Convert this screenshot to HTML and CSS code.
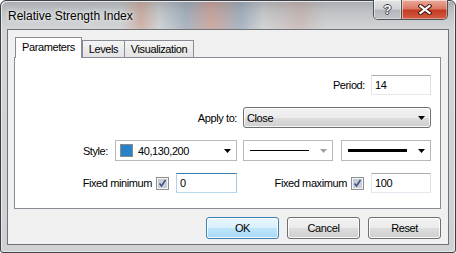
FILE: index.html
```html
<!DOCTYPE html>
<html lang="en">
<head>
    <meta charset="UTF-8">
    <title>Relative Strength Index</title>
    <link rel="stylesheet" href="styles.css">
</head>
<body>

<div class="window">
    <div class="titlebar">
        <span class="title">Relative Strength Index</span>
        <div class="caption-buttons">
            <div class="cap-btn help">?</div>
            <div class="cap-btn close">
                <svg width="14" height="11" viewBox="0 0 14 11">
                    <path d="M2.5 2 L11.5 9 M11.5 2 L2.5 9" stroke="#4a1c14" stroke-width="4.2" stroke-linecap="square"/>
                    <path d="M2.5 2 L11.5 9 M11.5 2 L2.5 9" stroke="#ffffff" stroke-width="2.2" stroke-linecap="square"/>
                </svg>
            </div>
        </div>
    </div>

    <div class="client">
        <div class="tabs">
            <div class="tab active tab-params">Parameters</div>
            <div class="tab tab-levels">Levels</div>
            <div class="tab tab-vis">Visualization</div>
        </div>

        <div class="panel">
            <div class="row row-edit">
                <span>Period:</span>
                <div class="edit">14</div>
            </div>

            <div class="row row-combo">
                <span>Apply to:</span>
                <div class="select">
                    <span>Close</span>
                    <svg class="arrow" width="7" height="4" viewBox="0 0 7 4"><polygon points="0,0 7,0 3.5,4" fill="#000"/></svg>
                </div>
            </div>

            <div class="row row-combo row-style">
                <span class="style-label">Style:</span>
                <div class="combo combo-color">
                    <span class="swatch"></span>
                    <span class="combo-text">40,130,200</span>
                    <svg class="arrow" width="7" height="4" viewBox="0 0 7 4"><polygon points="0,0 7,0 3.5,4" fill="#000"/></svg>
                </div>
                <div class="combo combo-line">
                    <span class="line line-thin"></span>
                    <svg class="arrow" width="7" height="4" viewBox="0 0 7 4"><polygon points="0,0 7,0 3.5,4" fill="#a0a0a0"/></svg>
                </div>
                <div class="combo combo-line combo-last">
                    <span class="line line-thick"></span>
                    <svg class="arrow" width="7" height="4" viewBox="0 0 7 4"><polygon points="0,0 7,0 3.5,4" fill="#000"/></svg>
                </div>
            </div>

            <div class="row row-edit">
                <div class="group group-min">
                    <span>Fixed minimum</span>
                    <svg class="check" width="13" height="13" viewBox="0 0 13 13">
                        <rect x="0.5" y="0.5" width="12" height="12" fill="#f3f4f5" stroke="#8e8f8f"/>
                        <rect x="2" y="2" width="9" height="9" fill="#c9ced6"/>
                        <path d="M3.5 6.5 L5.5 9 L9.5 3" fill="none" stroke="#3e5389" stroke-width="1.6"/>
                    </svg>
                    <div class="edit edit-focus">0</div>
                </div>
                <div class="group group-max">
                    <span>Fixed maximum</span>
                    <svg class="check" width="13" height="13" viewBox="0 0 13 13">
                        <rect x="0.5" y="0.5" width="12" height="12" fill="#f3f4f5" stroke="#8e8f8f"/>
                        <rect x="2" y="2" width="9" height="9" fill="#c9ced6"/>
                        <path d="M3.5 6.5 L5.5 9 L9.5 3" fill="none" stroke="#3e5389" stroke-width="1.6"/>
                    </svg>
                    <div class="edit">100</div>
                </div>
            </div>
        </div>

        <div class="buttons">
            <div class="btn btn-default">OK</div>
            <div class="btn">Cancel</div>
            <div class="btn">Reset</div>
        </div>
    </div>
</div>

</body>
</html>
```

FILE: styles.css
```css
* {
    box-sizing: border-box;
}
body {
    margin: 0;
    background: #ffffff;
    font-family: "Liberation Sans", Arial, sans-serif;
    font-size: 11px;
    letter-spacing: -0.4px;
    color: #000;
    white-space: nowrap;
}
.window {
    width: 456px;
    height: 253px;
    border: 1px solid #3d4044;
    border-radius: 6px 6px 3px 3px;
    padding: 0 6px 7px;
    display: flex;
    flex-direction: column;
    background:
        linear-gradient(90deg, rgba(255,255,255,0) 0, rgba(255,255,255,0) 120px, rgba(205,120,90,.35) 140px, rgba(255,255,255,0) 158px, rgba(80,115,150,.3) 185px, rgba(200,95,70,.35) 210px, rgba(80,115,150,.3) 240px, rgba(255,255,255,0) 262px, rgba(190,110,90,.2) 300px, rgba(255,255,255,0) 325px, rgba(255,255,255,0) 100%) 0 0 / 100% 29px no-repeat,
        linear-gradient(180deg, #a7abaf 0, #bfc2c5 10px, #d3d5d7 28px, #cfd1d3 100%);
    box-shadow: inset 1px 1px 0 #e6e8ea, inset -1px -1px 0 #e6e8ea;
}

/* title bar */
.titlebar {
    height: 28px;
    display: flex;
    align-items: flex-start;
    padding-left: 1px;
}
.title {
    margin-top: 8px;
    line-height: 14px;
    font-size: 12px;
    letter-spacing: 0;
    text-shadow: 0 0 6px #f4f4f4, 0 0 3px #f4f4f4;
}
.caption-buttons {
    margin-left: auto;
    margin-right: 1px;
    margin-top: -1px;
    height: 20px;
    display: flex;
    border: 1px solid #4f5257;
    border-top: none;
    border-radius: 0 0 5px 5px;
    overflow: hidden;
}
.cap-btn {
    height: 19px;
    display: flex;
    align-items: center;
    justify-content: center;
    box-shadow: inset 1px 1px 0 rgba(255,255,255,.5), inset -1px -1px 0 rgba(255,255,255,.35);
}
.help {
    width: 28px;
    border-right: 1px solid #4f5257;
    background: linear-gradient(180deg, #e2e4e6 0, #d2d5d8 45%, #b3b7bb 55%, #c3c6c9 100%);
    color: #fff;
    font-weight: bold;
    font-size: 13px;
    letter-spacing: 0;
    text-shadow: 1px 0 0 #3f4348, -1px 0 0 #3f4348, 0 1px 0 #3f4348, 0 -1px 0 #3f4348;
}
.close {
    width: 45px;
    background: linear-gradient(180deg, #e9ab9c 0, #dc7a64 45%, #c43b22 55%, #d25e44 100%);
}

/* client area */
.client {
    height: 216px;
    border: 1px solid #70747a;
    background: #f0f0f0;
    padding: 7px 7px 0 6px;
}
.tabs {
    height: 20px;
    display: flex;
    align-items: flex-end;
    margin-left: 1px;
}
.tab {
    height: 17px;
    line-height: 16px;
    text-align: center;
    border: 1px solid #898c95;
    border-bottom: none;
    margin-left: -1px;
    background: linear-gradient(180deg, #f4f4f4, #e3e3e3);
}
.tab.active {
    position: relative;
    z-index: 1;
    height: 21px;
    margin-bottom: -1px;
    margin-left: 0;
    line-height: 18px;
    padding-bottom: 3px;
    background: #ffffff;
}
.tab-params {
    width: 67px;
}
.tab-levels {
    width: 43px;
    margin-left: 0;
}
.tab-vis {
    width: 70px;
}
.panel {
    height: 152px;
    border: 1px solid #898c95;
    background: #ffffff;
    padding: 17px 9px 0 0;
    display: flex;
    flex-direction: column;
    gap: 12px;
}
.row {
    display: flex;
    justify-content: flex-end;
    align-items: center;
    gap: 6px;
}
.row-edit {
    height: 20px;
}
.row-combo {
    height: 21px;
}
.edit {
    flex-shrink: 0;
    width: 60px;
    height: 20px;
    line-height: 18px;
    padding-left: 3px;
    background: #fff;
    border: 1px solid;
    border-color: #abadb3 #dbdfe6 #e3e9ef #e2e3ea;
}
.edit-focus {
    width: 61px;
    border-color: #3d7bad #a4c9e3 #b7d9ed #b5cfe7;
}
.select {
    width: 188px;
    height: 21px;
    border: 1px solid #707070;
    border-radius: 3px;
    background: linear-gradient(180deg, #f2f2f2 0, #ebebeb 50%, #dddddd 50%, #cfcfcf 100%);
    box-shadow: inset 0 0 0 1px rgba(255,255,255,.8);
    display: flex;
    align-items: center;
    justify-content: space-between;
    padding: 0 5px 0 3px;
}
.row-style {
    gap: 0;
}
.style-label {
    margin-right: 7px;
}
.combo {
    height: 21px;
    border: 1px solid #b6b8bc;
    background: #fff;
    display: flex;
    align-items: center;
    padding: 0 5px 0 4px;
}
.combo-color {
    width: 122px;
}
.combo-line {
    width: 90px;
    margin-left: 6px;
    padding-left: 6px;
}
.combo-last {
    margin-left: 8px;
}
.swatch {
    width: 13px;
    height: 13px;
    background: #2882c8;
    border: 1px solid #8a8a8a;
    margin-right: 5px;
}
.combo-text {
    flex: 1;
}
.line {
    width: 59px;
    background: #000;
    margin-right: auto;
}
.line-thin {
    height: 1px;
}
.line-thick {
    height: 3px;
}
.group {
    display: flex;
    align-items: center;
    flex-shrink: 0;
}
.group .check {
    flex-shrink: 0;
    margin: 0 7px 0 4px;
}
.group-min {
    margin-right: 28px;
}
.group-max {
    width: 160px;
    justify-content: flex-end;
}

/* dialog buttons */
.buttons {
    display: flex;
    justify-content: flex-end;
    gap: 8px;
    margin-top: 8px;
}
.btn {
    width: 73px;
    height: 22px;
    line-height: 20px;
    text-align: center;
    border: 1px solid #707070;
    border-radius: 3px;
    background: linear-gradient(180deg, #f2f2f2 0, #ebebeb 50%, #dddddd 50%, #cfcfcf 100%);
    box-shadow: inset 0 0 0 1px rgba(255,255,255,.85);
}
.btn-default {
    border-color: #3c7fb1;
    background: linear-gradient(180deg, #eaf6fd 0, #d9f0fc 50%, #bee6fd 50%, #a7d9f5 100%);
}
```
